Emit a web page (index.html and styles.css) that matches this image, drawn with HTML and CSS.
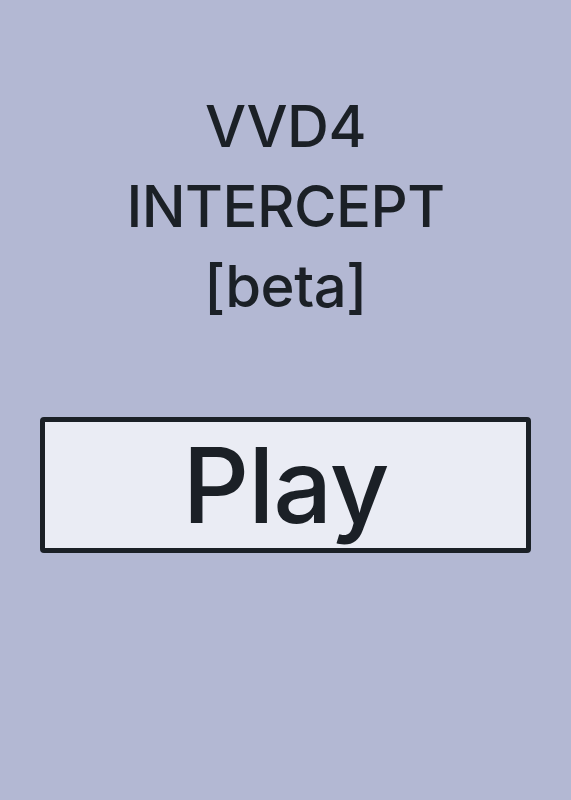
FILE: index.html
```html
<!DOCTYPE html>
<html lang="en">

<head>
  <meta charset="UTF-8">
  <meta name="viewport" content="width=device-width, initial-scale=1.0">
  <title>VVD4 INTERCEPT</title>
  <link rel="stylesheet" href="styles.css">
</head>

<body>

  <div class="menu">
    <h1 class="title">VVD4<br>INTERCEPT<br>[beta]</h1>
    <button class="play">Play</button>
  </div>

</body>

</html>
```

FILE: styles.css
```css
* {
  padding: 0;
  margin: 0;
  box-sizing: border-box;
}

html {
  height: 100%;
}

body {
  height: 100%;
  background-color: #b3b8d3;
  font-family: Inter, "Noto Sans", sans-serif;
  color: #1b2026;
}

.menu {
  display: flex;
  flex-direction: column;
  align-items: center;
  padding: 86px 40px 0;
}

.title {
  font-size: 58px;
  font-weight: 500;
  line-height: 80px;
  text-align: center;
  letter-spacing: -0.5px;
}

.play {
  width: 100%;
  height: 136px;
  margin-top: 91px;
  background-color: #eaecf4;
  border: 5px solid #1b2026;
  border-radius: 4px;
  font-family: inherit;
  font-size: 104px;
  font-weight: 500;
  color: #1b2026;
  letter-spacing: -1px;
}
```
